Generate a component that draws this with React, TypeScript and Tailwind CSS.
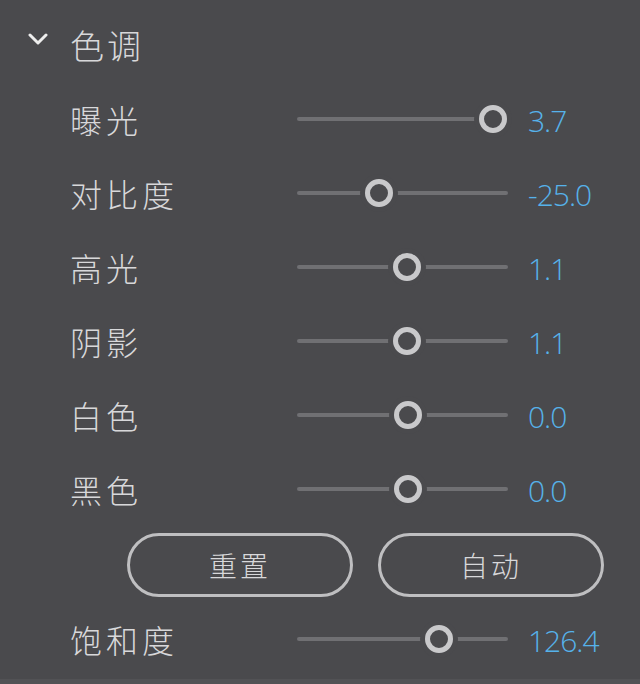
import React from 'react';

interface SliderRow {
  label: string;
  value: string;
  pos: number; // thumb centre, px from track start
}

const rows: SliderRow[] = [
  { label: '曝光', value: '3.7', pos: 196 },
  { label: '对比度', value: '-25.0', pos: 82 },
  { label: '高光', value: '1.1', pos: 110 },
  { label: '阴影', value: '1.1', pos: 110 },
  { label: '白色', value: '0.0', pos: 111 },
  { label: '黑色', value: '0.0', pos: 111 },
];

const cjk = { fontFamily: '"Noto Sans CJK SC", "Noto Sans", sans-serif' };
const num = { fontFamily: '"Open Sans", "Noto Sans", sans-serif' };

const Slider: React.FC<{ pos: number }> = ({ pos }) => (
  <div className="relative w-[211px] h-[30px] flex items-center">
    <div className="w-full h-[4px] rounded-full bg-[#707073]" />
    {/* thumb, with a background-coloured halo that cuts the track */}
    <div
      className="absolute top-[1px] w-[28px] h-[28px] rounded-full border-[5px] border-[#c9c9cb] bg-[#4a4a4d] shadow-[0_0_0_5px_#4a4a4d]"
      style={{ left: pos - 14 }}
    />
  </div>
);

const Row: React.FC<{ row: SliderRow; height: string }> = ({ row, height }) => (
  <div className={`flex items-center ${height}`}>
    <div className="w-[297px] pl-[70px] text-[32px] leading-none tracking-[4px] font-light text-[#d8d8da]" style={cjk}>
      {row.label}
    </div>
    <Slider pos={row.pos} />
    <div className="pl-[20px] pt-[3px] text-[30px] leading-none font-light tracking-[-1px] text-[#56b2ea]" style={num}>
      {row.value}
    </div>
  </div>
);

export default function App() {
  return (
    <div className="w-[640px] h-[684px] bg-[#4a4a4d] flex flex-col overflow-hidden">
      <div className="pt-[8px]">
        {/* header */}
        <div className="flex items-center h-[74px]">
          <svg className="ml-[28px] mb-[12px]" width="20" height="12" viewBox="0 0 20 12">
            <path d="M2 2 L10 10 L18 2" fill="none" stroke="#eeeeee" strokeWidth="3" strokeLinecap="round" strokeLinejoin="round" />
          </svg>
          <span className="ml-[22px] text-[34px] leading-none tracking-[3px] font-light text-[#d8d8da]" style={cjk}>
            色调
          </span>
        </div>

        {rows.map((r) => (
          <Row key={r.label} row={r} height="h-[74px]" />
        ))}

        {/* buttons */}
        <div className="flex items-center h-[78px] pl-[127px] gap-[25px]">
          {['重置', '自动'].map((b) => (
            <button
              key={b}
              className="w-[226px] h-[64px] rounded-full border-[3px] border-[#bfbfc1] text-[28px] leading-none tracking-[3px] font-light text-[#d8d8da]"
              style={cjk}
            >
              {b}
            </button>
          ))}
        </div>

        <Row row={{ label: '饱和度', value: '126.4', pos: 142 }} height="h-[70px]" />
      </div>
      <div className="mt-auto h-[5px] bg-[#525255]" />
    </div>
  );
}
